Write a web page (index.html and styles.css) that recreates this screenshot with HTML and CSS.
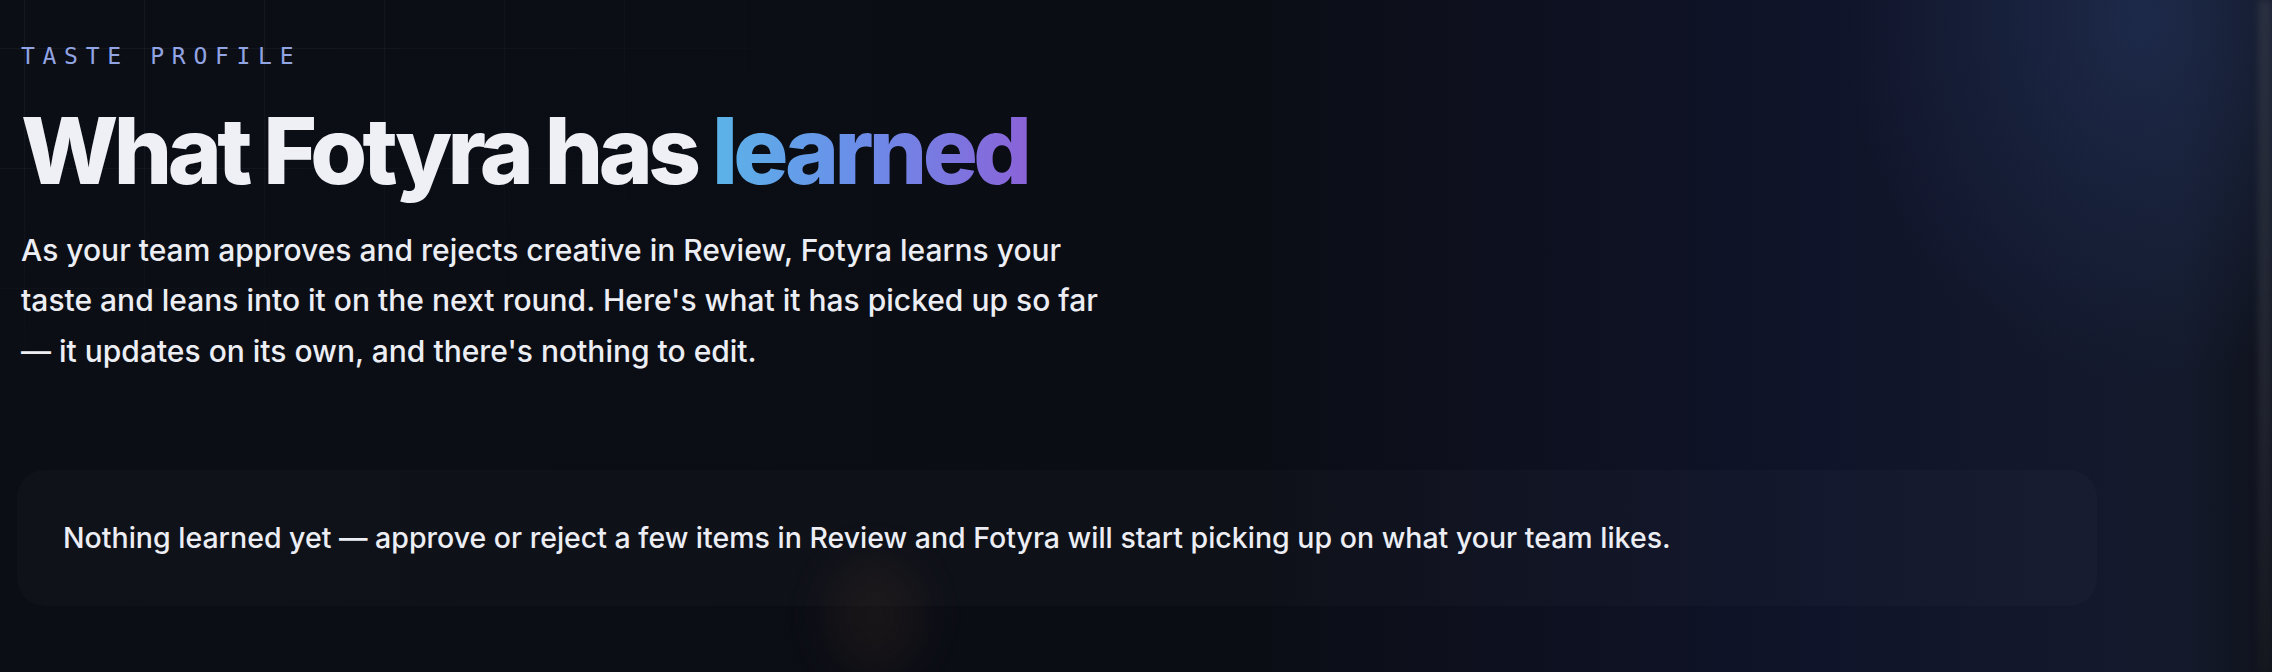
FILE: index.html
```html
<!DOCTYPE html>
<html lang="en">
<head>
    <meta charset="UTF-8">
    <meta name="viewport" content="width=device-width, initial-scale=1.0">
    <title>Taste Profile</title>
    <link rel="stylesheet" href="styles.css">
</head>
<body>
    <div class="page">
        <div class="grid-bg"></div>
        <div class="glow-warm"></div>
        <div class="edge"></div>

        <header class="intro">
            <div class="eyebrow">Taste Profile</div>
            <h1>What Fotyra has <span class="accent">learned</span></h1>
            <p class="lead">As your team approves and rejects creative in Review, Fotyra learns your taste and leans into it on the next round. Here's what it has picked up so far — it updates on its own, and there's nothing to edit.</p>
        </header>

        <div class="empty-card">
            Nothing learned yet — approve or reject a few items in Review and Fotyra will start picking up on what your team likes.
        </div>
    </div>
</body>
</html>
```

FILE: styles.css
```css
html, body {
    margin: 0;
    height: 100%;
}

body {
    font-family: 'Inter', 'Liberation Sans', sans-serif;
    background-color: #0b0d14;
    color: #eef0f6;
    overflow: hidden;
}

.page {
    position: relative;
    min-height: 100%;
    padding: 43px 175px 0 21px;
    box-sizing: border-box;
    background:
        radial-gradient(ellipse 420px 520px at 2140px 20px, rgba(36, 54, 96, 0.55), transparent 70%),
        linear-gradient(90deg, #0c0e16 0%, #0b0d15 55%, #10142a 80%, #141a2c 96%, #0f121c 100%);
}

/* faint grid in the top-left corner */
.grid-bg {
    position: absolute;
    inset: 0;
    background-image:
        linear-gradient(rgba(255, 255, 255, 0.045) 1px, transparent 1px),
        linear-gradient(90deg, rgba(255, 255, 255, 0.045) 1px, transparent 1px);
    background-size: 120px 120px;
    background-position: 24px 48px;
    -webkit-mask-image: radial-gradient(ellipse 900px 420px at 0 0, #000 30%, transparent 100%);
    mask-image: radial-gradient(ellipse 900px 420px at 0 0, #000 30%, transparent 100%);
    pointer-events: none;
}

.glow-warm {
    position: absolute;
    left: 830px;
    top: 560px;
    width: 90px;
    height: 110px;
    border-radius: 50%;
    background: rgba(120, 80, 40, 0.12);
    filter: blur(22px);
    pointer-events: none;
}

.edge {
    position: absolute;
    top: 0;
    right: 0;
    width: 14px;
    height: 100%;
    background: linear-gradient(180deg, #2a3040 0%, #20242f 60%, #16181f 100%);
    filter: blur(3px);
    pointer-events: none;
}

.intro {
    position: relative;
}

.eyebrow {
    font-family: 'DejaVu Sans Mono', 'Liberation Mono', monospace;
    font-size: 23px;
    letter-spacing: 0.335em;
    text-transform: uppercase;
    color: #91a4e3;
    line-height: 1.2;
}

h1 {
    margin: 29px 0 0;
    font-size: 92px;
    font-weight: 800;
    letter-spacing: -0.05em;
    line-height: 1.1;
    color: #eef0f6;
}

.accent {
    background: linear-gradient(90deg, #5bb4e8 0%, #6a8ee9 45%, #8a63d8 100%);
    -webkit-background-clip: text;
    background-clip: text;
    color: transparent;
}

.lead {
    margin: 24px 0 0;
    max-width: 1112px;
    font-size: 30px;
    font-weight: 500;
    line-height: 50.5px;
    color: #eceef4;
}

.empty-card {
    position: relative;
    margin: 94px 0 0 -4px;
    padding: 40px 46px;
    border-radius: 28px;
    background: rgba(255, 255, 255, 0.018);
    font-size: 28.5px;
    font-weight: 500;
    line-height: 56px;
    color: #eceef4;
}
```
